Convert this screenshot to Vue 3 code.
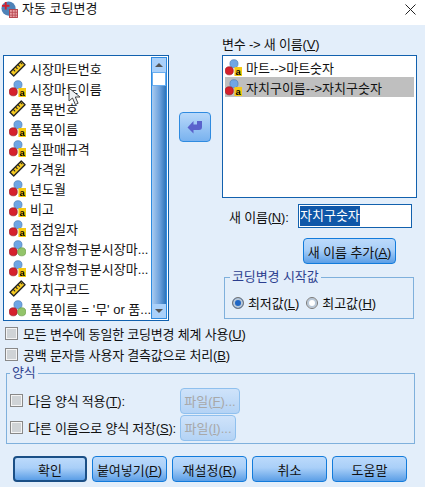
<script setup>
const vars = [
  { name: '시장마트번호', icon: 'ruler' },
  { name: '시장마트이름', icon: 'nominal-a' },
  { name: '품목번호', icon: 'ruler' },
  { name: '품목이름', icon: 'nominal-a' },
  { name: '실판매규격', icon: 'nominal-a' },
  { name: '가격원', icon: 'ruler' },
  { name: '년도월', icon: 'nominal-a' },
  { name: '비고', icon: 'nominal-a' },
  { name: '점검일자', icon: 'nominal-a' },
  { name: '시장유형구분시장마...', icon: 'nominal' },
  { name: '시장유형구분시장마...', icon: 'nominal-a' },
  { name: '자치구코드', icon: 'ruler' },
  { name: "품목이름 = '무' or 품...", icon: 'nominal' },
];
const mapped = [
  { name: '마트-->마트숫자', selected: false },
  { name: '자치구이름-->자치구숫자', selected: true },
];
const buttons = [
  { text: '확인', key: '', cls: 'default' },
  { text: '붙여넣기', key: 'P', cls: '' },
  { text: '재설정', key: 'R', cls: '' },
  { text: '취소', key: '', cls: '' },
  { text: '도움말', key: '', cls: '' },
];
</script>

<template>
  <div class="dialog">
    <header class="titlebar">
      <svg class="app-icon" viewBox="0 0 18 18">
        <circle cx="8" cy="8" r="7.500" fill="#4f83b8" />
        <path d="M5 1v8M1 5h8" stroke="#d3202c" stroke-width="2" />
        <rect x="9" y="9" width="8.500" height="8.500" fill="#e9a0a5" stroke="#b4434c" />
        <path d="M9 12h8.500M9 15h8.500M12 9v8.500M15 9v8.500" stroke="#b4434c" stroke-width=".8" />
      </svg>
      <span class="title">자동 코딩변경</span>
      <svg class="close" viewBox="0 0 11 11"><path d="M.5.500l10 10M10.500.500l-10 10" stroke="#222" fill="none" /></svg>
    </header>

    <div class="body">
      <div class="main">
        <div class="var-list">
          <ul class="items">
            <li v-for="(v, i) in vars" :key="i" class="item">
              <svg class="var-icon" viewBox="0 0 18 18">
                <template v-if="v.icon === 'ruler'">
                  <path d="M1 13 13 1l4 4L5 17z" fill="#f4c920" stroke="#222" stroke-width="1.400" stroke-linejoin="round" />
                  <path d="M4.500 10l2 2M7 7.500l2 2M9.500 5l2 2M12 2.500l2 2" stroke="#222" stroke-width="1.100" />
                </template>
                <template v-else>
                  <circle cx="9.500" cy="5" r="4.300" fill="#6fa6e4" stroke="#4a7cb8" stroke-width=".7" />
                  <circle cx="4.500" cy="12.500" r="4.300" fill="#d5202c" stroke="#9a1620" stroke-width=".7" />
                  <circle v-if="v.icon === 'nominal'" cx="13.500" cy="12.500" r="4.300" fill="#93c46a" stroke="#66993f" stroke-width=".7" />
                  <template v-else>
                    <rect x="10" y="8.500" width="8" height="9.500" fill="#f6c912" />
                    <text x="14" y="17" text-anchor="middle" class="icon-a">a</text>
                  </template>
                </template>
              </svg>
              <span>{{ v.name }}</span>
            </li>
          </ul>
          <div class="scrollbar">
            <div class="sb-btn"><i class="tri up"></i></div>
            <div class="sb-thumb"></div>
            <div class="sb-track"></div>
            <div class="sb-btn"><i class="tri down"></i></div>
          </div>
          <svg class="cursor" viewBox="0 0 14 19">
            <path d="M1 1v13l3.500-3 2.800 6.500 2.800-1.200-2.800-6.300h4.700z" fill="#eef1f4" stroke="#444" />
          </svg>
        </div>

        <div class="middle">
          <button class="arrow-btn">
            <svg viewBox="0 0 16 14" width="16" height="14">
              <path d="M6.500 1v3.500H10V1h5v6c0 2-1 3-3 3H6.500v3.500L.5 7.500z" fill="#5a62cc" />
            </svg>
          </button>
        </div>

        <div class="right">
          <div class="caption">변수 -> 새 이름(<u>V</u>)</div>
          <ul class="map-list">
            <li v-for="m in mapped" :key="m.name" class="map-item" :class="{ selected: m.selected }">
              <svg class="var-icon" viewBox="0 0 18 18">
                <circle cx="9.500" cy="5" r="4.300" fill="#6fa6e4" stroke="#4a7cb8" stroke-width=".7" />
                <circle cx="4.500" cy="12.500" r="4.300" fill="#d5202c" stroke="#9a1620" stroke-width=".7" />
                <rect x="10" y="8.500" width="8" height="9.500" fill="#f6c912" />
                <text x="14" y="17" text-anchor="middle" class="icon-a">a</text>
              </svg>
              <span>{{ m.name }}</span>
            </li>
          </ul>

          <div class="name-row">
            <label>새 이름(<u>N</u>):</label>
            <div class="name-input"><span class="sel">자치구숫자</span></div>
          </div>
          <div class="add-row">
            <button class="btn add">새 이름 추가(<u>A</u>)</button>
          </div>

          <fieldset class="group start">
            <legend>코딩변경 시작값</legend>
            <div class="radios">
              <span class="radio on"></span><span class="radio-label first">최저값(<u>L</u>)</span>
              <span class="radio"></span><span class="radio-label">최고값(<u>H</u>)</span>
            </div>
          </fieldset>
        </div>
      </div>

      <div class="check-row top"><span class="check"></span><span>모든 변수에 동일한 코딩변경 체계 사용(<u>U</u>)</span></div>
      <div class="check-row"><span class="check"></span><span>공백 문자를 사용자 결측값으로 처리(<u>B</u>)</span></div>

      <fieldset class="group template">
        <legend>양식</legend>
        <div class="tpl-row">
          <span class="check"></span><span class="tpl-label">다음 양식 적용(<u>T</u>):</span>
          <button class="btn disabled file-f">파일(<u>F</u>)...</button>
        </div>
        <div class="tpl-row">
          <span class="check"></span><span class="tpl-label">다른 이름으로 양식 저장(<u>S</u>):</span>
          <button class="btn disabled file-i">파일(<u>I</u>)...</button>
        </div>
      </fieldset>

      <div class="actions">
        <button v-for="b in buttons" :key="b.text" class="btn action" :class="b.cls">
          {{ b.text }}<template v-if="b.key">(<u>{{ b.key }}</u>)</template>
        </button>
      </div>
    </div>
  </div>
</template>

<style>
html, body { margin: 0; background: #e3eefa; }
</style>

<style scoped>
.dialog {
  width: 425px;
  height: 487px;
  overflow: hidden;
  display: flex;
  flex-direction: column;
  font-family: "Liberation Sans", "Noto Sans CJK KR", sans-serif;
  font-size: 13px;
  color: #111;
  background: #e3eefa;
}
.icon-a { font: bold 10px "Liberation Sans", sans-serif; fill: #000; }
.titlebar {
  height: 25px;
  box-sizing: border-box;
  flex-shrink: 0;
  background: #fff;
  display: flex;
  align-items: flex-start;
  padding: 1px 8px 0 1px;
}
.app-icon { width: 17px; height: 17px; }
.title { margin-left: 4px; line-height: 16px; }
.close { width: 11px; height: 11px; margin: 3px 1px 0 auto; }
.body { flex: 1; display: flex; flex-direction: column; }
.main { display: flex; padding: 30px 0 0 3px; align-items: flex-start; }
.var-list {
  position: relative;
  width: 166px;
  height: 266px;
  box-sizing: border-box;
  border: 1px solid #1261ae;
  background: #fff;
  display: flex;
  flex-shrink: 0;
}
.items { list-style: none; margin: 0; padding: 2px 0 0 5px; flex: 1; min-width: 0; }
.item { height: 20px; display: flex; align-items: center; white-space: nowrap; }
.var-icon { width: 17px; height: 17px; margin: 1px 4px 0 0; flex-shrink: 0; }
.scrollbar {
  width: 14px;
  margin: 1px 1px 1px 0;
  display: flex;
  flex-direction: column;
  border: 1px solid #2f8be0;
}
.sb-btn { height: 14px; background: #a9d0fa; display: flex; align-items: center; justify-content: center; }
.tri { width: 0; height: 0; border-left: 4px solid transparent; border-right: 4px solid transparent; }
.tri.up { border-bottom: 4px solid #555; }
.tri.down { border-top: 4px solid #555; }
.sb-thumb { height: 14px; background: #fff; border: 1px solid #69aef0; box-sizing: border-box; }
.sb-track { flex: 1; background: linear-gradient(90deg, #a9cbf0, #6ba0dc 55%, #2d74ba); }
.cursor { position: absolute; left: 64px; top: 31px; width: 14px; height: 19px; }
.middle { width: 53px; flex-shrink: 0; padding: 57px 0 0 10px; box-sizing: border-box; }
.arrow-btn {
  width: 32px;
  height: 30px;
  padding: 0;
  border: 1px solid #2f8be0;
  border-radius: 4px;
  background: linear-gradient(#b9d9fa, #79b2ef);
  display: flex;
  align-items: center;
  justify-content: center;
}
.right { width: 195px; flex-shrink: 0; margin-top: -19px; }
.caption { height: 19px; line-height: 17px; letter-spacing: -.2px; }
.map-list {
  list-style: none;
  margin: 0;
  height: 143px;
  box-sizing: border-box;
  padding: 1px 2px;
  border: 1px solid #1261ae;
  background: #fff;
}
.map-item { height: 20px; display: flex; align-items: center; white-space: nowrap; }
.selected { background: #bfbfbf; }
.name-row { display: flex; align-items: center; margin-top: 6px; padding-left: 7px; height: 24px; }
.name-row label { width: 69px; letter-spacing: -.2px; }
.name-input {
  width: 114px;
  height: 24px;
  box-sizing: border-box;
  border: 1px solid #1261ae;
  background: #fff;
  padding: 1px 0 0 1px;
  line-height: 20px;
}
.sel { background: #0f57a8; color: #fff; display: inline-block; height: 20px; }
.add-row { padding: 10px 0 0 81px; }
.btn {
  font: inherit;
  color: #111;
  padding: 0;
  border: 1px solid #127bdb;
  border-radius: 4px;
  background: linear-gradient(#bcdafb, #a9cff8 45%, #5b9ee6);
  white-space: nowrap;
}
.add { width: 93px; height: 26px; letter-spacing: -.1px; }
.group { margin: 0; padding: 0; border: 1px solid #7fb0dc; min-width: 0; }
.group legend { padding: 0 2px; margin-left: 5px; line-height: 14px; font-size: 13px; color: #2d3f8f; letter-spacing: -.1px; }
.start { width: 190px; height: 49px; box-sizing: border-box; margin: 6px 0 0 2px; }
.radios { display: flex; align-items: center; padding: 9px 0 0 7px; }
.radio {
  width: 12px;
  height: 12px;
  box-sizing: border-box;
  border-radius: 50%;
  border: 1px solid #777;
  background: #fff;
  box-shadow: inset 0 0 0 2px #b9c8d8;
  margin-right: 4px;
}
.radio.on { background: #1f66c4; }
.radio-label.first { margin-right: 7px; letter-spacing: -.1px; }
.check-row { display: flex; align-items: center; height: 21px; padding-left: 5px; letter-spacing: -.2px; }
.check-row.top { margin-top: 2px; }
.check {
  width: 11px;
  height: 11px;
  border: 1px solid #888;
  background: #cfd3d6;
  box-shadow: inset 0 0 0 1px #f4f4f4;
  margin-right: 5px;
  flex-shrink: 0;
}
.template { width: 409px; height: 78px; box-sizing: border-box; margin: 1px 0 0 6px; }
.template legend { margin-left: 3px; }
.tpl-row { display: flex; align-items: center; height: 27px; padding-left: 3px; letter-spacing: -.2px; }
.tpl-row:first-of-type { margin-top: 7px; }
.tpl-label { width: 152px; white-space: nowrap; flex-shrink: 0; }
.disabled {
  height: 26px;
  color: #a8a8a8;
  border-color: #8fc0ee;
  background: linear-gradient(#cfe3fa, #b4d3f5);
}
.file-f { width: 60px; }
.file-i { width: 56px; }
.actions { display: flex; gap: 5px; padding: 12px 0 0 13px; }
.action { width: 75px; height: 26px; }
.action.default { width: 74px; border: 2px solid #1a4f86; }
</style>
